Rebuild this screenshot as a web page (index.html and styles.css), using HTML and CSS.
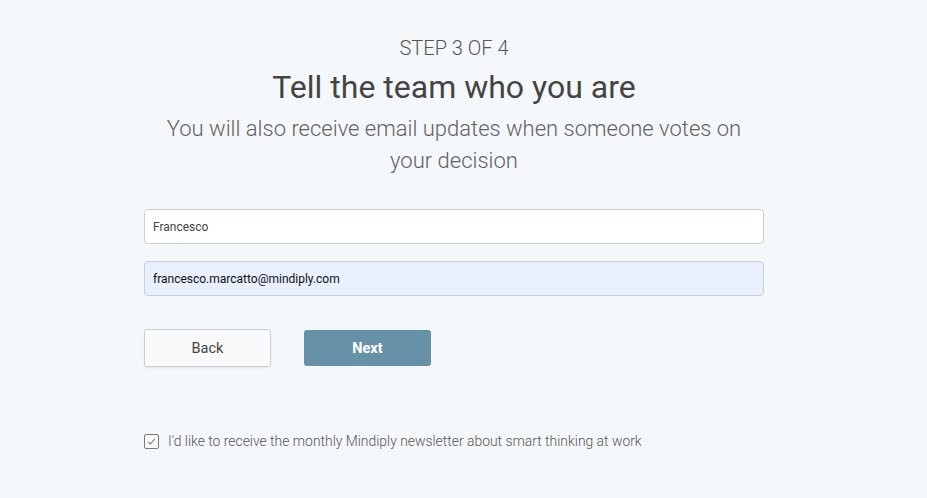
FILE: index.html
```html
<!DOCTYPE html>
<html>
<head>
<meta charset="utf-8">
<link rel="stylesheet" href="styles.css">
</head>
<body>
<main class="page">
  <div class="wrap">
    <div class="step">STEP 3 OF 4</div>
    <h1 class="title">Tell the team who you are</h1>
    <p class="subtitle">You will also receive email updates when someone votes on your decision</p>
    <form class="form">
      <input class="field" type="text" value="Francesco">
      <input class="field field-auto" type="email" value="francesco.marcatto@mindiply.com">
      <div class="actions">
        <button type="button" class="btn btn-back">Back</button>
        <button type="button" class="btn btn-next">Next</button>
      </div>
      <label class="check">
        <span class="box"><svg width="11" height="11" viewBox="0 0 11 11"><path d="M2.2 5.8 L4.4 8 L8.8 2.8" fill="none" stroke="#7a7a7a" stroke-width="1.1"/></svg></span>
        <span class="check-text">I'd like to receive the monthly Mindiply newsletter about smart thinking at work</span>
      </label>
    </form>
  </div>
</main>
</body>
</html>
```
FILE: styles.css
```css
html, body {
  margin: 0;
  padding: 0;
  background: #f5f8fb;
}
body {
  font-family: Roboto, "Liberation Sans", sans-serif;
  width: 927px;
  height: 498px;
  overflow: hidden;
}
.page {
  padding: 35px 19px 0 0;
}
.wrap {
  width: 620px;
  margin: 0 auto;
  text-align: center;
}
.step {
  font-size: 20px;
  font-weight: 300;
  color: #555;
  line-height: 26px;
}
.title {
  margin: 7px 0 0;
  font-size: 32px;
  font-weight: 400;
  color: #444;
  line-height: 38px;
}
.subtitle {
  margin: 7px 0 0;
  font-size: 22px;
  font-weight: 300;
  color: #626262;
  line-height: 32px;
}
.form {
  margin-top: 32px;
  display: flex;
  flex-direction: column;
  text-align: left;
}
.field {
  box-sizing: border-box;
  width: 620px;
  height: 35px;
  border: 1px solid #ccd0d4;
  border-radius: 4px;
  background: #fff;
  padding: 0 8px;
  font-family: Roboto, "Liberation Sans", sans-serif;
  font-size: 12px;
  color: #444;
  margin: 0 0 17px;
  outline: none;
}
.field-auto {
  background: #e8effd;
  color: #111;
}
.actions {
  display: flex;
  gap: 33px;
  margin-top: 16px;
  align-items: center;
}
.btn {
  box-sizing: border-box;
  width: 127px;
  font-family: Roboto, "Liberation Sans", sans-serif;
  font-size: 14.5px;
  border-radius: 3px;
  cursor: pointer;
}
.btn-back {
  height: 38px;
  background: #f8fafc;
  border: 1px solid #ccd0d4;
  color: #444;
  box-shadow: 0 1px 2px rgba(0,0,0,0.08);
}
.btn-next {
  height: 36px;
  background: #6791a7;
  border: none;
  color: #fff;
  font-weight: 700;
}
.check {
  margin-top: 66px;
  display: flex;
  align-items: center;
  gap: 9px;
}
.box {
  box-sizing: border-box;
  width: 15px;
  height: 15px;
  border: 1px solid #7a7a7a;
  border-radius: 2px;
  display: flex;
  align-items: center;
  justify-content: center;
  background: #f8f9fa;
}
.box svg { display: block; }
.check-text {
  font-size: 13.9px;
  font-weight: 300;
  color: #555;
}
```
